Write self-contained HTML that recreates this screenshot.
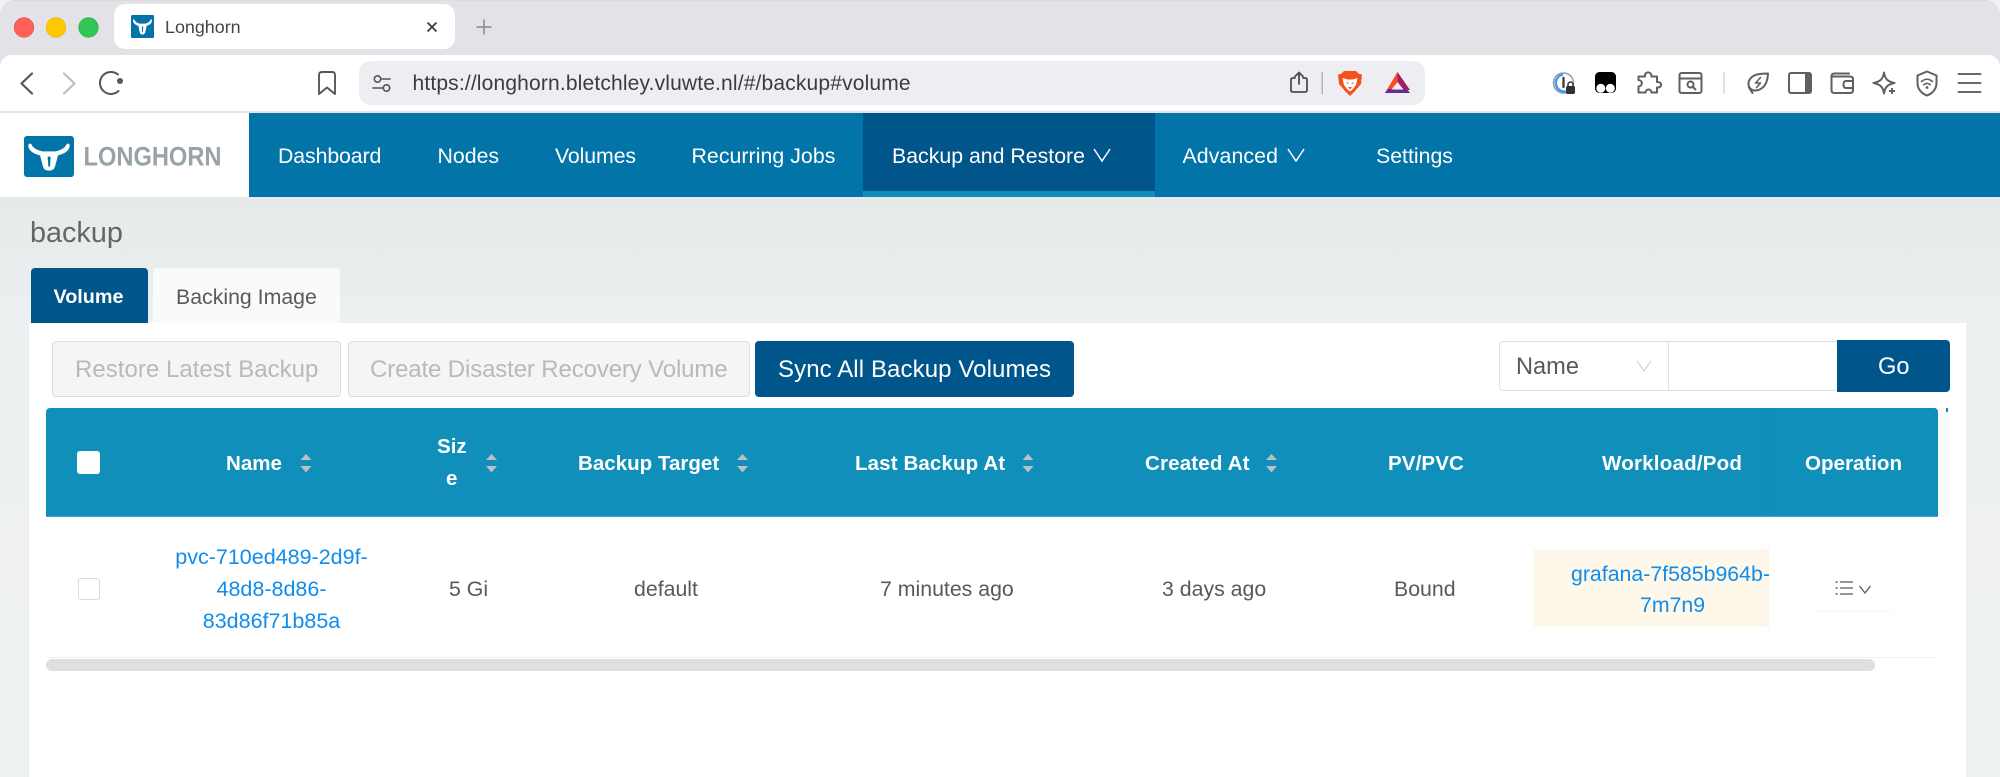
<!DOCTYPE html>
<html lang="en">
<head>
<meta charset="utf-8">
<title>Longhorn</title>
<style>
html,body{margin:0;padding:0;width:2000px;height:777px;overflow:hidden;background:#f1f1f3;font-family:"Liberation Sans",sans-serif}
#root{position:relative;width:2000px;height:777px;overflow:hidden}
.b{position:absolute;box-sizing:border-box}
.t{position:absolute;white-space:nowrap;height:40px;line-height:40px;font-size:21.3px;color:#595959}
.n{color:#fff}
.h{color:#fff;font-weight:bold;font-size:20.55px}
.l{color:#0f8cec;font-size:21.5px}
.c{text-align:center}
svg.o{position:absolute;left:0;top:0}
</style>
</head>
<body>
<div id="root">
<div class="b" style="left:0;top:0;width:2000px;height:70px;background:#e3e2e7;border-radius:16px 16px 0 0;border-top:1px solid #dcdcde"></div>
<div class="b" style="left:114px;top:4px;width:341px;height:45px;background:#fff;border-radius:11px"></div>
<div class="b" style="left:0;top:55px;width:2000px;height:58px;background:#fff;border-radius:12px 12px 0 0;border-bottom:2px solid #e6e6ea"></div>
<div class="b" style="left:359px;top:61px;width:1066px;height:44px;background:#eeedf2;border-radius:12px"></div>

<div class="t" style="left:165px;top:7px;font-size:17.9px;color:#444">Longhorn</div>
<div class="t" style="left:412.5px;top:64px;font-size:21px;letter-spacing:.16px;color:#3c3c40">https://longhorn.bletchley.vluwte.nl/#/backup#volume</div>

<!-- nav -->
<div class="b" style="left:0;top:113px;width:249px;height:84px;background:#fff"></div>
<div class="b" style="left:249px;top:113px;width:1751px;height:84px;background:#0274a8"></div>
<div class="b" style="left:863px;top:113px;width:292px;height:84px;background:#00558b;border-bottom:6px solid #118fbb"></div>
<div class="t n" style="left:278px;top:136px;letter-spacing:-.1px">Dashboard</div>
<div class="t n" style="left:437.5px;top:136px">Nodes</div>
<div class="t n" style="left:555px;top:136px;letter-spacing:-.1px">Volumes</div>
<div class="t n" style="left:691.5px;top:136px;letter-spacing:.05px">Recurring Jobs</div>
<div class="t n" style="left:892px;top:136px;letter-spacing:0">Backup and Restore</div>
<div class="t n" style="left:1182.5px;top:136px;letter-spacing:.1px">Advanced</div>
<div class="t n" style="left:1376px;top:136px">Settings</div>

<!-- main -->
<div class="b" style="left:0;top:197px;width:2000px;height:580px;background:linear-gradient(#e6eaea 0,#edf0f1 130px,#eef1f2 100%)"></div>
<div class="b" style="left:29px;top:323px;width:1937px;height:454px;background:#fff"></div>
<div class="t" style="left:30px;top:213px;font-size:28.8px;color:#666">backup</div>
<div class="b" style="left:31px;top:268px;width:117px;height:55px;background:#00558b;border-radius:4px 4px 0 0"></div>
<div class="b" style="left:153px;top:268px;width:187px;height:55px;background:#fafafa;border-radius:4px 4px 0 0"></div>
<div class="t n" style="left:53.5px;top:277px;font-size:19.8px;font-weight:bold">Volume</div>
<div class="t" style="left:176px;top:277px">Backing Image</div>

<!-- buttons -->
<div class="b" style="left:52px;top:341px;width:289px;height:56px;background:#f5f5f5;border:1px solid #dedede;border-radius:4px"></div>
<div class="t" style="left:75px;top:350px;font-size:24px;letter-spacing:.03px;color:#b9b9b9">Restore Latest Backup</div>
<div class="b" style="left:348px;top:341px;width:402px;height:56px;background:#f5f5f5;border:1px solid #dedede;border-radius:4px"></div>
<div class="t" style="left:370px;top:350px;font-size:24px;letter-spacing:-.13px;color:#b9b9b9">Create Disaster Recovery Volume</div>
<div class="b" style="left:755px;top:341px;width:319px;height:56px;background:#00558b;border-radius:4px"></div>
<div class="t n" style="left:778px;top:350px;font-size:24px;letter-spacing:.1px">Sync All Backup Volumes</div>

<!-- search -->
<div class="b" style="left:1499px;top:341px;width:340px;height:50px;background:#fff;border:1px solid #e0e0e0;border-radius:4px"></div>
<div class="b" style="left:1668px;top:341px;width:1px;height:50px;background:#e0e0e0"></div>
<div class="b" style="left:1837px;top:340px;width:113px;height:52px;background:#00558b;border-radius:0 4px 4px 0"></div>
<div class="t" style="left:1516px;top:347px;font-size:23.6px">Name</div>
<div class="t n" style="left:1878px;top:347px;font-size:23.6px">Go</div>

<!-- table -->
<div class="b" style="left:46px;top:408px;width:1892px;height:109px;background:#118fbb;border-radius:4px 4px 0 0;border-bottom:1px solid #3fa5cb"></div>
<div class="b" style="left:1938px;top:408px;width:12px;height:110px;background:#fafafa"></div>
<div class="b" style="left:1946px;top:408px;width:2px;height:4px;background:#118fbb"></div>
<div class="b" style="left:77px;top:451px;width:23px;height:23px;background:#fff;border-radius:3px"></div>
<div class="t h" style="left:226px;top:444px">Name</div>
<div class="t h" style="left:437px;top:427px">Siz</div>
<div class="t h" style="left:446px;top:459px">e</div>
<div class="t h" style="left:578px;top:444px">Backup Target</div>
<div class="t h" style="left:855px;top:444px;letter-spacing:.1px">Last Backup At</div>
<div class="t h" style="left:1145px;top:444px;letter-spacing:.15px">Created At</div>
<div class="t h" style="left:1388px;top:444px;letter-spacing:.1px">PV/PVC</div>
<div class="t h" style="left:1602px;top:444px;letter-spacing:.2px">Workload/Pod</div>

<!-- row -->
<div class="b" style="left:78px;top:578px;width:22px;height:22px;background:#fff;border:1px solid #dcdcdc;border-radius:3px"></div>
<div class="t l c" style="left:151px;top:537px;width:241px">pvc-710ed489-2d9f-</div>
<div class="t l c" style="left:151px;top:569px;width:241px">48d8-8d86-</div>
<div class="t l c" style="left:151px;top:601px;width:241px">83d86f71b85a</div>
<div class="t" style="left:449px;top:569px">5 Gi</div>
<div class="t" style="left:634px;top:569px">default</div>
<div class="t" style="left:880px;top:569px">7 minutes ago</div>
<div class="t" style="left:1162px;top:569px">3 days ago</div>
<div class="t" style="left:1394px;top:569px">Bound</div>
<div class="b" style="left:1533px;top:549px;width:240px;height:78px;background:#fdf8ea;border-radius:4px"></div>
<div class="t l" style="left:1571px;top:554px;font-size:21.3px">grafana-7f585b964b-</div>
<div class="t l" style="left:1640px;top:585px;font-size:21.3px">7m7n9</div>
<div class="b" style="left:46px;top:657px;width:1892px;height:1px;background:#f0f0f0"></div>
<div class="b" style="left:46px;top:659px;width:1829px;height:12px;background:#dfdfdf;border-radius:6px"></div>

<!-- fixed column -->
<div class="b" style="left:1769px;top:517px;width:181px;height:140px;background:#fff;box-shadow:-3px 0 5px -3px rgba(0,0,0,.03)"></div>
<div class="b" style="left:1769px;top:408px;width:169px;height:109px;background:#118fbb;box-shadow:-3px 0 5px -3px rgba(0,0,0,.04);border-radius:0 4px 0 0;border-bottom:1px solid #3fa5cb"></div>
<div class="t h" style="left:1805px;top:444px">Operation</div>
<div class="b" style="left:1811px;top:570px;width:84px;height:40px;background:#fff;border-radius:4px;box-shadow:0 1px 2px rgba(0,0,0,.03)"></div>

<svg class="o" width="2000" height="777" viewBox="0 0 2000 777" xmlns="http://www.w3.org/2000/svg">
<defs>
<symbol id="bull" viewBox="0 0 150 123" preserveAspectRatio="none">
<rect width="150" height="123" rx="9" fill="#0274a8"/>
<path d="M13 30Q13 20 22 24Q28 40 55 46H95Q122 40 128 24Q137 20 137 30Q135 50 102 58L93 92Q90 104 75 104Q60 104 57 92L48 58Q15 50 13 30Z" fill="#fff"/>
<path d="M71 62L80 62L78 92L73 92Z" fill="#0274a8"/>
</symbol>
</defs>

<!-- traffic lights -->
<circle cx="24" cy="27.5" r="9.8" fill="#ff5f57" stroke="#e94b4b" stroke-width=".6"/>
<circle cx="56" cy="27.5" r="9.8" fill="#fec802" stroke="#e8b800" stroke-width=".6"/>
<circle cx="88.5" cy="27.5" r="9.8" fill="#33c555" stroke="#27ae46" stroke-width=".6"/>

<use href="#bull" x="131" y="15" width="23" height="23"/>
<path d="M427.5 22.5L436.500 31.500M436.500 22.500L427.500 31.500" stroke="#3a3a3a" stroke-width="1.700" fill="none"/>
<path d="M484 19.500V34.500M476.500 27H491.500" stroke="#8a8a8e" stroke-width="1.500" fill="none"/>

<!-- toolbar left -->
<g fill="none" stroke-linecap="round" stroke-linejoin="round">
<path d="M32 73.5L21.5 83.5L32 93.5" stroke="#55555a" stroke-width="2.2"/>
<path d="M64 73.5L74.5 83.5L64 93.5" stroke="#bdbdc0" stroke-width="2.2"/>
<path d="M118 74.5A11 11 0 1 0 118.5 91" stroke="#55555a" stroke-width="2"/>
<path d="M319 75Q319 72 322 72H332Q335 72 335 75V94L327 87.5L319 94Z" stroke="#55555a" stroke-width="1.9"/>
<circle cx="377.5" cy="79" r="3.2" stroke="#55555a" stroke-width="1.6"/>
<path d="M381 79H390M373 88H383" stroke="#55555a" stroke-width="1.6"/>
<circle cx="386.5" cy="88" r="3.2" stroke="#55555a" stroke-width="1.6"/>
<!-- share -->
<path d="M1295 78H1293Q1291 78 1291 80V90Q1291 92 1293 92H1305Q1307 92 1307 90V80Q1307 78 1305 78H1303" stroke="#4e4e52" stroke-width="1.8"/>
<path d="M1299 84V72.5M1295 76.5L1299 72.5L1303 76.5" stroke="#4e4e52" stroke-width="1.8"/>
</g>
<rect x="1321.5" y="72" width="1.5" height="22" fill="#b3b3b6"/>
<!-- brave -->
<path d="M1344 71H1356L1359 74L1362 74.5L1361 84L1355 91L1350 96L1345 91L1339 84L1338 74.5L1341 74Z" fill="#f4511e"/>
<path d="M1342.5 78L1347.5 79.5H1352.5L1357.5 78L1356 85L1353 89L1350 91.5L1347 89L1344 85Z" fill="#fff"/>
<path d="M1348 87H1352L1350 89.5Z" fill="#f4511e"/>
<path d="M1346 82L1348.5 83L1348 84.5ZM1354 82L1351.5 83L1352 84.5Z" fill="#f4511e"/>
<!-- BAT -->
<path d="M1397.5 72L1385 93H1392L1397.5 82Z" fill="#ff4724"/>
<path d="M1397.5 72V82L1403 90H1410Z" fill="#9e1f63"/>
<path d="M1385 93H1410L1407 89H1388Z" fill="#662d91"/>
<path d="M1397.5 82L1391.5 89.5H1403.5Z" fill="#eeedf2"/>

<!-- 1password -->
<g fill="none">
<circle cx="1563.5" cy="83" r="10" stroke="#8f9aa6" stroke-width="1.4"/>
<path d="M1563 74.5A8.5 8.5 0 1 0 1566 91.5" stroke="#3b9bf5" stroke-width="2.4"/>
<path d="M1563.5 78V87" stroke="#444" stroke-width="2.4" stroke-linecap="round"/>
<path d="M1568 86V84.5A2.500 2.500 0 0 1 1573 84.5V86" stroke="#333" stroke-width="1.5"/>
</g>
<rect x="1566" y="86" width="9" height="8" rx="1.5" fill="#333"/>
<!-- tamper -->
<rect x="1595" y="72" width="21" height="21" rx="4.5" fill="#000"/>
<circle cx="1600.800" cy="88.300" r="4.500" fill="#fff"/><circle cx="1610.300" cy="88.300" r="4.500" fill="#fff"/>
<!-- outline icons -->
<g fill="none" stroke="#5f5f64" stroke-width="2" stroke-linecap="round" stroke-linejoin="round">
<path d="M1645 76.5C1644 71 1652 71 1651.500 76.5H1657V82C1662.500 81.5 1662.500 88 1657 87.500V92.500H1651.500C1651 88.500 1646 88.500 1645.500 92.500H1638.500V86.500C1643 86 1643 80.500 1638.500 80V76.500Z"/>
<rect x="1679.500" y="73" width="22" height="20" rx="2"/>
<path d="M1680 78.500H1701"/>
<circle cx="1690.500" cy="84.500" r="3"/>
<path d="M1693 87L1695.500 89.500"/>
<!-- leaf -->
<path d="M1768 73.500C1759 73.500 1751.500 74.500 1749 81C1747 86.500 1751 91 1756 90.500C1763 89.500 1767.500 84 1768 73.500Z"/>
<path d="M1749 87.500L1752.500 93"/>
<path d="M1760.500 77.500L1755.500 83H1760.500L1756.500 87.500" stroke-width="1.600"/>
<!-- sidebar -->
<rect x="1789" y="73" width="22" height="20" rx="2"/>
<!-- wallet -->
<path d="M1833 76.500H1850Q1853 76.500 1853 79.500V90Q1853 93 1850 93H1834.500Q1831.500 93 1831.500 90V76.500Q1831.500 73.500 1834.500 73.500H1849"/>
<path d="M1853 81H1846Q1843.500 81 1843.500 84.500Q1843.500 88 1846 88H1853"/>
<!-- star -->
<path d="M1884 72.500C1885 79 1887.500 81.500 1894.500 83C1887.500 84.500 1885 87 1884 93.500C1883 87 1880.500 84.500 1873.500 83C1880.500 81.500 1883 79 1884 72.500Z"/>
<!-- shield -->
<path d="M1927 71.500L1936.500 75.500V83C1936.500 89 1932.500 93.500 1927 95.500C1921.500 93.500 1917.500 89 1917.500 83V75.500Z"/>
<path d="M1921.500 81.500C1925 78.500 1929 78.500 1932.500 81.500M1923.800 84.800C1925.800 83 1928.200 83 1930.200 84.800" stroke-width="1.600"/>
<!-- hamburger -->
<path d="M1958.500 74H1980.500M1958.500 83H1980.500M1958.500 92H1980.500" stroke="#69696e"/>
</g>
<rect x="1805" y="73" width="6.500" height="20" rx="1" fill="#5f5f64"/>
<path d="M1892 88V94M1889 91H1895" stroke="#5f5f64" stroke-width="1.900"/>
<circle cx="1927" cy="87.500" r="1.400" fill="#5f5f64"/>
<circle cx="120" cy="81" r="3" fill="#55555a"/>
<rect x="1723" y="72" width="2" height="22" fill="#e3e2e7"/>

<!-- logo -->
<use href="#bull" x="24" y="136" width="50" height="41"/>
<text x="83.500" y="165.500" font-family="Liberation Sans" font-weight="bold" font-size="26.500" fill="#98a2a9" textLength="138" lengthAdjust="spacingAndGlyphs">LONGHORN</text>

<!-- nav chevrons -->
<g fill="none" stroke="#fff" stroke-width="1.500">
<path d="M1094 149L1102 161L1110 149"/>
<path d="M1288 149L1296 161L1304 149"/>
</g>
<!-- select chevron -->
<path d="M1637 361L1644 371L1651 361" fill="none" stroke="#cfcfcf" stroke-width="1.100"/>

<!-- sort icons -->
<g fill="#bfbfbf">
<path d="M300.500 460L306 454L311.500 460ZM300.500 466L306 472.500L311.500 466Z"/>
<path d="M486 460L491.500 454L497 460ZM486 466L491.500 472.500L497 466Z"/>
<path d="M737 460L742.500 454L748 460ZM737 466L742.500 472.500L748 466Z"/>
<path d="M1022.500 460L1028 454L1033.500 460ZM1022.500 466L1028 472.500L1033.500 466Z"/>
<path d="M1266 460L1271.500 454L1277 460ZM1266 466L1271.500 472.500L1277 466Z"/>
</g>

<!-- operation icon -->
<g stroke="#595959" fill="none" stroke-width="1.300">
<path d="M1840 582H1853M1840 588H1853M1840 594H1853"/>
<path d="M1835.500 582H1837.500M1835.500 588H1837.500M1835.500 594H1837.500" stroke-width="1.600"/>
<path d="M1859.500 586L1865 593L1870.500 586"/>
</g>
</svg>
</div>
</body>
</html>
